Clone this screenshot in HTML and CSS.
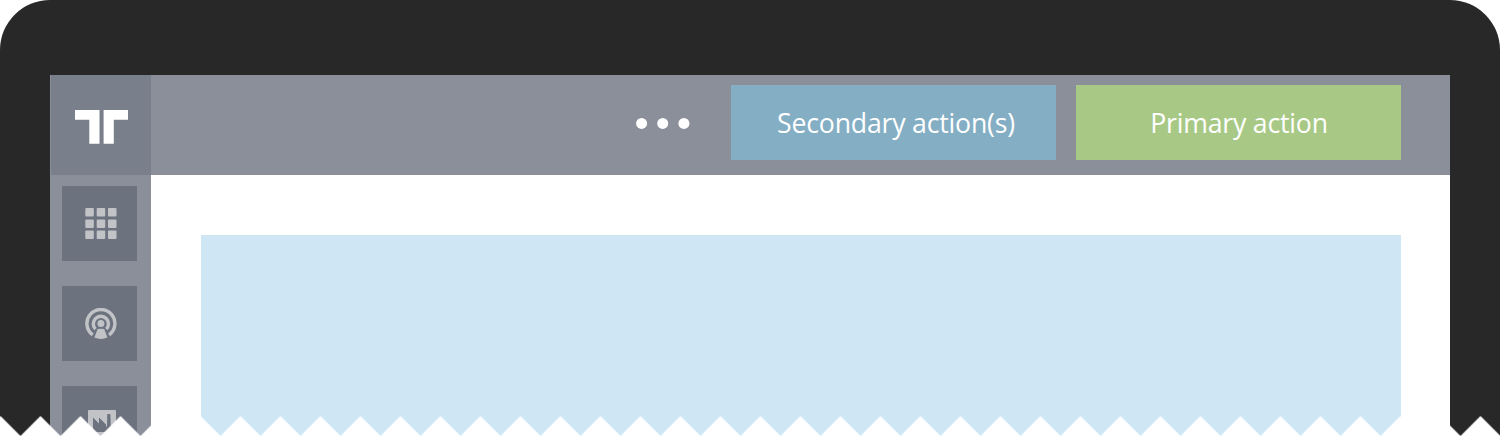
FILE: index.html
```html
<!DOCTYPE html>
<html lang="en">
<head>
<meta charset="utf-8">
<title>App header actions</title>
<link rel="stylesheet" href="styles.css">
</head>
<body>
<div class="device">
  <div class="screen">
    <nav class="sidebar">
      <div class="logo">
        <svg width="53" height="34" viewBox="0 0 53 34" fill="#fff"><path d="M0 0h24.5v33.7H14.3V9.7H0zM28.6 0H53v9.7H38.8v24H28.6z"/></svg>
      </div>
      <div class="tile">
        <svg width="32" height="32" viewBox="0 0 32 32" fill="#c1c3c7"><rect x=".3" width="8.5" height="8.5" rx="1"/><rect x="11.7" width="8.5" height="8.5" rx="1"/><rect x="23" width="8.5" height="8.5" rx="1"/><rect x=".3" y="11.4" width="8.5" height="8.5" rx="1"/><rect x="11.7" y="11.4" width="8.5" height="8.5" rx="1"/><rect x="23" y="11.4" width="8.5" height="8.5" rx="1"/><rect x=".3" y="22.6" width="8.5" height="8.5" rx="1"/><rect x="11.7" y="22.6" width="8.5" height="8.5" rx="1"/><rect x="23" y="22.6" width="8.5" height="8.5" rx="1"/></svg>
      </div>
      <div class="tile">
        <svg width="32" height="32" viewBox="0 0 32 32"><g fill="none" stroke="#c1c3c7" stroke-width="3.4"><path d="M7.7 26.9A14 14 0 1 1 24.1 26.9"/><path d="M10.4 21.1A7.6 7.6 0 1 1 21.4 21.1"/></g><circle cx="15.9" cy="15.6" r="3.5" fill="#c1c3c7"/><path d="M12.6 21.1Q15.9 20.3 19.2 21.1L22.4 29.5Q15.9 32.3 9.4 29.5z" fill="#c1c3c7"/></svg>
      </div>
      <div class="tile">
        <svg class="factory" width="28" height="28" viewBox="0 0 28 28"><rect width="28" height="28" rx="1" fill="#c1c3c7"/><path d="M5 22V7.5l6 6v-6l7 7v2h1L19.3 4h3l.7 18z" fill="#6c727e"/></svg>
      </div>
    </nav>
    <main class="main">
      <header class="bar">
        <svg class="more" width="54" height="12" viewBox="0 0 54 12" fill="#fff"><circle cx="5.6" cy="6.4" r="5.5"/><circle cx="26.7" cy="6.4" r="5.5"/><circle cx="47.9" cy="6.4" r="5.5"/></svg>
        <div class="button secondary">Secondary action(s)</div>
        <div class="button primary">Primary action</div>
      </header>
      <div class="content"></div>
    </main>
  </div>
  <svg class="torn" width="1500" height="21">
    <defs><pattern id="teeth" x=".5" width="40" height="21" patternUnits="userSpaceOnUse"><path d="M0 0L20 20L40 0V21H0z" fill="#fff"/></pattern></defs>
    <rect width="1500" height="21" fill="url(#teeth)"/>
  </svg>
</div>
</body>
</html>
```
FILE: styles.css
```css
* { box-sizing: border-box; }

body {
  margin: 0;
  background: #fff;
  font-family: "Open Sans", "Noto Sans", sans-serif;
}

.device {
  position: relative;
  width: 1500px;
  height: 437px;
  padding: 75px 50px 0;
  border-radius: 50px 50px 0 0;
  background: #282828;
  overflow: hidden;
}

.screen {
  display: flex;
  height: 362px;
  background: #fff;
}

.sidebar {
  display: flex;
  flex-direction: column;
  width: 101px;
  background: #8b8f9a;
}

.logo {
  flex: none;
  height: 100px;
  margin-left: 1px;
  padding: 35px 0 0 24px;
  background: #7a808b;
}

.logo svg, .tile svg { display: block; }

.tile {
  flex: none;
  width: 75px;
  height: 75px;
  margin: 11px 0 14px 12px;
  padding: 22px 0 0 23px;
  background: #6c727e;
}

.tile .factory { margin: 2px 0 0 3px; }

.main { flex: 1; }

.bar {
  display: flex;
  align-items: flex-start;
  justify-content: flex-end;
  gap: 20px;
  height: 100px;
  padding: 10px 49px 0 0;
  background: #8b8f9a;
}

.more { margin: 32px 21px 0 0; }

.button {
  width: 325px;
  height: 75px;
  color: #fff;
  font-size: 26.67px;
  letter-spacing: -0.2px;
  line-height: 75px;
  text-align: center;
}

.secondary {
  padding-left: 5px;
  background: #84aec4;
}

.primary {
  padding-left: 1px;
  background: #a8c986;
}

.content {
  height: 202px;
  margin: 60px 49px 0 50px;
  background: #cfe7f5;
}

/* Torn lower edge laid over everything on the device */
.torn {
  position: absolute;
  left: 0;
  bottom: 0;
}
```
